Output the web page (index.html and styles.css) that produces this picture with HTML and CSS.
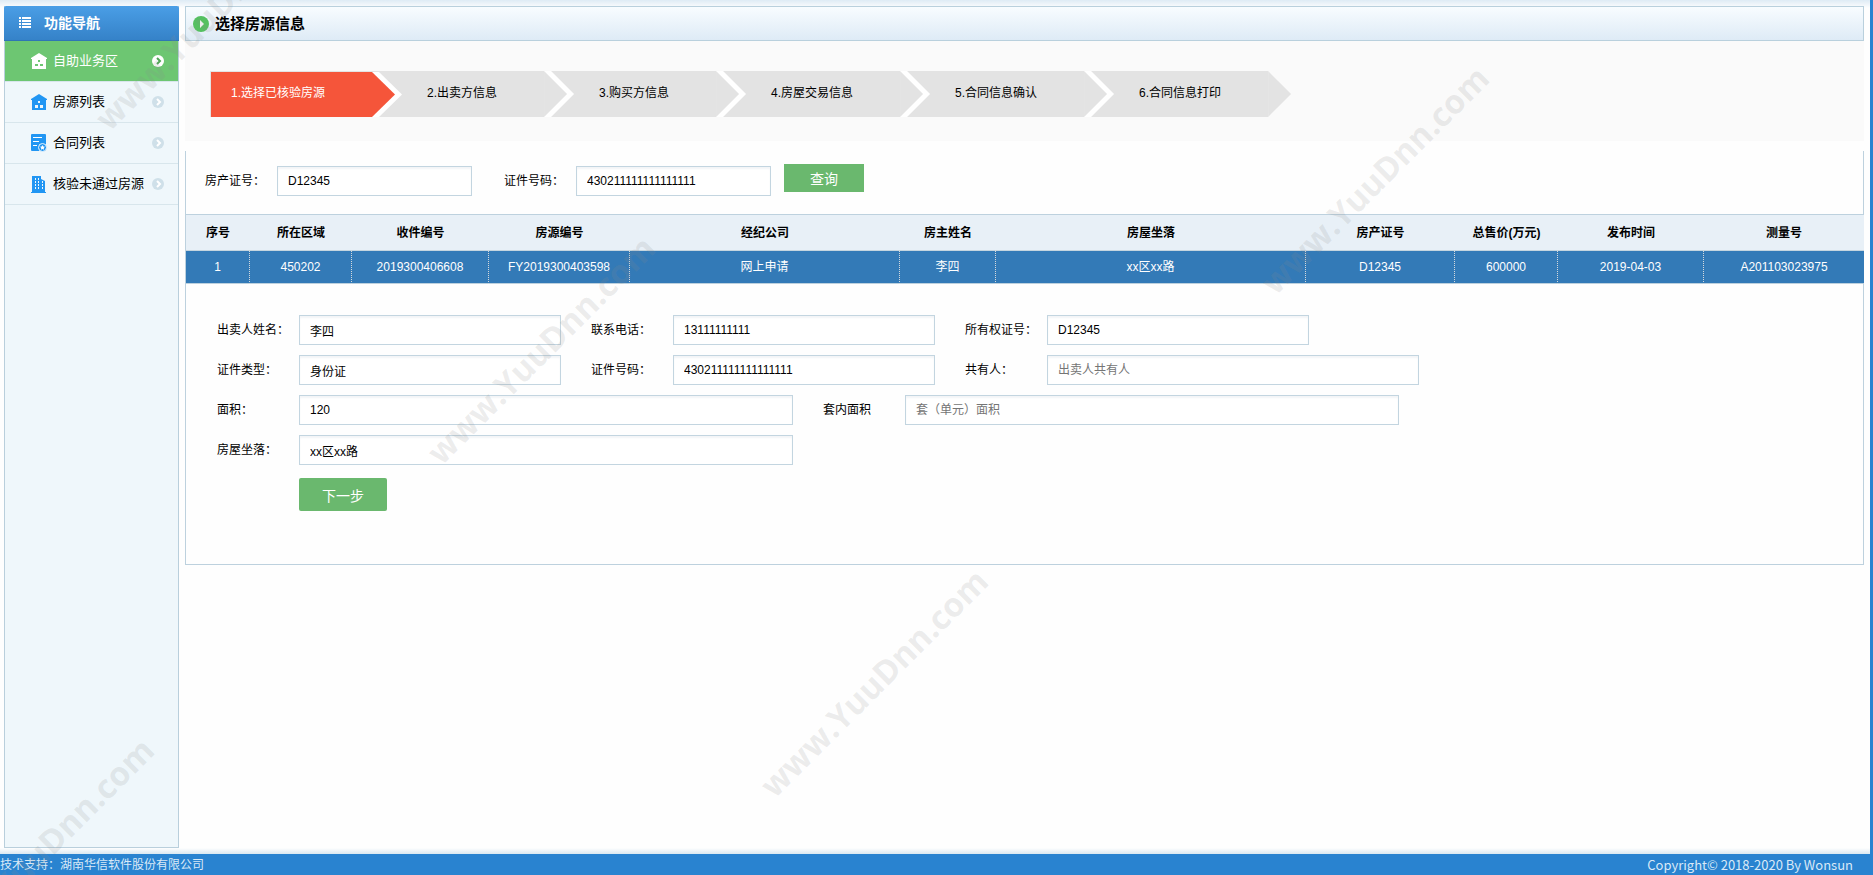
FILE: index.html
```html
<!DOCTYPE html>
<html lang="zh-CN">
<head>
<meta charset="utf-8">
<title>选择房源信息</title>
<link rel="stylesheet" href="styles.css">
</head>
<body>
<div class="page">
  <aside class="sidebar">
    <h2 class="sidebar-title">
      <svg width="12" height="12" viewBox="0 0 12 12" fill="#fff" aria-hidden="true"><path d="M0 0h2v2H0zM3 0h9v2H3zM0 3h2v2H0zM3 3h9v2H3zM0 6h2v2H0zM3 6h9v2H3zM0 9h2v2H0zM3 9h9v2H3z"/></svg>
      功能导航
    </h2>
    <nav class="menu">
      <a class="menu-item active" href="#">
        <svg width="16" height="17" viewBox="0 0 16 17" aria-hidden="true"><path fill="currentColor" fill-rule="evenodd" d="M8 0l8 5v1h-1v10H1V6H0V5zM7 7v2h2V7zM4 11v2h3v-2zM9 11v2h3v-2z"/></svg>
        <span class="menu-text">自助业务区</span>
        <svg class="go" width="12" height="12" viewBox="0 0 12 12" aria-hidden="true"><circle cx="6" cy="6" r="6" fill="currentColor"/><path class="go-mark" d="M5 3l3 3-3 3" fill="none" stroke-width="2"/></svg>
      </a>
      <a class="menu-item" href="#">
        <svg width="16" height="17" viewBox="0 0 16 17" aria-hidden="true"><path fill="currentColor" fill-rule="evenodd" d="M8 0l8 5v1h-1v10H1V6H0V5zM7 7v2h2V7zM4 11v3h3v-3zM9 11v3h3v-3z"/></svg>
        <span class="menu-text">房源列表</span>
        <svg class="go" width="12" height="12" viewBox="0 0 12 12" aria-hidden="true"><circle cx="6" cy="6" r="6" fill="currentColor"/><path class="go-mark" d="M5 3l3 3-3 3" fill="none" stroke-width="2"/></svg>
      </a>
      <a class="menu-item" href="#">
        <svg width="16" height="18" viewBox="0 0 16 18" aria-hidden="true"><path fill="currentColor" d="M1 0h13a1 1 0 0 1 1 1v16H1a1 1 0 0 1-1-1V1a1 1 0 0 1 1-1z"/><path d="M2 3.500h9M2 7.500h6M2 11.500h4" stroke="#fff" stroke-width="1"/><circle cx="11.500" cy="13.500" r="4" fill="#2196f3" stroke="#eff7fb"/><path fill="#fff" d="M11.500 11l.8 1.600 1.700.2-1.200 1.200.3 1.800-1.600-.8-1.600.8.3-1.800L9 12.800l1.700-.2z"/></svg>
        <span class="menu-text">合同列表</span>
        <svg class="go" width="12" height="12" viewBox="0 0 12 12" aria-hidden="true"><circle cx="6" cy="6" r="6" fill="currentColor"/><path class="go-mark" d="M5 3l3 3-3 3" fill="none" stroke-width="2"/></svg>
      </a>
      <a class="menu-item" href="#">
        <svg width="16" height="17" viewBox="0 0 16 17" aria-hidden="true"><path fill="currentColor" d="M1 0h9v3l4 2v11h1v1H0v-1h1z"/><path d="M4.500 2v12M7.500 2v12M11.500 5v9" stroke="#eff7fb" stroke-width="1" stroke-dasharray="2 1"/></svg>
        <span class="menu-text">核验未通过房源</span>
        <svg class="go" width="12" height="12" viewBox="0 0 12 12" aria-hidden="true"><circle cx="6" cy="6" r="6" fill="currentColor"/><path class="go-mark" d="M5 3l3 3-3 3" fill="none" stroke-width="2"/></svg>
      </a>
    </nav>
  </aside>

  <main class="main">
    <h1 class="title">
      <svg width="16" height="16" viewBox="0 0 16 16" aria-hidden="true"><circle cx="8" cy="8" r="8" fill="#55c060"/><path d="M7 4l4 4-4 4z" fill="#fff"/></svg>
      选择房源信息
    </h1>
    <div class="steps-area">
      <ol class="steps">
        <li class="step current">1.选择已核验房源</li>
        <li class="step">2.出卖方信息</li>
        <li class="step">3.购买方信息</li>
        <li class="step">4.房屋交易信息</li>
        <li class="step">5.合同信息确认</li>
        <li class="step">6.合同信息打印</li>
      </ol>
    </div>
    <section class="panel">
      <form class="query">
        <div class="query-field">
          <label for="q-cert">房产证号：</label>
          <input class="input" id="q-cert" type="text" value="D12345">
        </div>
        <div class="query-field">
          <label for="q-id">证件号码：</label>
          <input class="input" id="q-id" type="text" value="430211111111111111">
        </div>
        <button class="button search" type="button">查询</button>
      </form>

      <table class="grid">
        <colgroup>
          <col class="c-no"><col class="c-area"><col class="c-receipt"><col class="c-house"><col class="c-agent"><col class="c-owner"><col class="c-place"><col class="c-cert"><col class="c-price"><col class="c-date"><col class="c-survey">
        </colgroup>
        <thead>
          <tr><th>序号</th><th>所在区域</th><th>收件编号</th><th>房源编号</th><th>经纪公司</th><th>房主姓名</th><th>房屋坐落</th><th>房产证号</th><th>总售价(万元)</th><th>发布时间</th><th>测量号</th></tr>
        </thead>
        <tbody>
          <tr><td>1</td><td>450202</td><td>2019300406608</td><td>FY2019300403598</td><td>网上申请</td><td>李四</td><td>xx区xx路</td><td>D12345</td><td>600000</td><td>2019-04-03</td><td>A201103023975</td></tr>
        </tbody>
      </table>

      <form class="detail">
        <div class="row">
          <div class="field"><label for="f-name">出卖人姓名：</label><input class="input" id="f-name" type="text" value="李四"></div>
          <div class="field"><label for="f-tel">联系电话：</label><input class="input" id="f-tel" type="text" value="13111111111"></div>
          <div class="field"><label for="f-own">所有权证号：</label><input class="input" id="f-own" type="text" value="D12345"></div>
        </div>
        <div class="row">
          <div class="field"><label for="f-type">证件类型：</label><input class="input" id="f-type" type="text" value="身份证"></div>
          <div class="field"><label for="f-id">证件号码：</label><input class="input" id="f-id" type="text" value="430211111111111111"></div>
          <div class="field"><label for="f-co">共有人：</label><input class="input medium" id="f-co" type="text" placeholder="出卖人共有人"></div>
        </div>
        <div class="row">
          <div class="field"><label for="f-size">面积：</label><input class="input wide" id="f-size" type="text" value="120"></div>
          <div class="field"><label for="f-inner">套内面积</label><input class="input wide" id="f-inner" type="text" placeholder="套（单元）面积"></div>
        </div>
        <div class="row">
          <div class="field"><label for="f-place">房屋坐落：</label><input class="input wide" id="f-place" type="text" value="xx区xx路"></div>
        </div>
        <div class="actions"><button class="button next" type="button">下一步</button></div>
      </form>
    </section>
  </main>
</div>

<footer class="footer">
  <span>技术支持：湖南华信软件股份有限公司</span>
  <span class="copyright">Copyright© 2018-2020 By Wonsun</span>
</footer>

<div class="watermarks" aria-hidden="true">
  <span class="mark mark-a">www.YuuDnn.com</span>
  <span class="mark mark-b">www.YuuDnn.com</span>
  <span class="mark mark-c">www.YuuDnn.com</span>
  <span class="mark mark-d">www.YuuDnn.com</span>
  <span class="mark mark-e">www.YuuDnn.com</span>
</div>
</body>
</html>
```
FILE: styles.css
```css
* { box-sizing: border-box; }

body {
  margin: 0;
  min-height: 100vh;
  display: flex;
  flex-direction: column;
  position: relative;
  border-right: 3px solid #2983d0;
  background: #fefefe;
  color: #000;
  font: 12px/18px "Liberation Sans", "Noto Sans CJK SC", sans-serif;
}

.page {
  flex: 1;
  display: flex;
  gap: 6px;
  padding: 6px 6px 6px 4px;
  background:
    linear-gradient(#deebf5, #fefefe) top / 100% 8px no-repeat,
    linear-gradient(#fefefe, #d9e8f1) bottom / 100% 6px no-repeat;
}

/* Sidebar */
.sidebar {
  width: 175px;
  flex: none;
  border: 1px solid #b9cfdc;
  border-top: 0;
  background: #eff7fb;
}

.sidebar-title {
  display: flex;
  align-items: center;
  gap: 13px;
  height: 35px;
  margin: 0 -1px;
  padding-left: 15px;
  border-radius: 2px 2px 0 0;
  border-bottom: 1px solid #2f76b5;
  background: linear-gradient(#4a9ee6, #3582c8);
  color: #fff;
  font-size: 14px;
}

.menu-item {
  display: flex;
  align-items: center;
  height: 41px;
  padding: 0 14px 0 26px;
  border-bottom: 1px solid #d8e6ec;
  color: #2196f3;
  text-decoration: none;
}

.menu-item.active {
  background: #6dc672;
  color: #fff;
}

.menu-text {
  flex: 1;
  padding-left: 6px;
  color: #000;
  font-size: 13px;
  white-space: nowrap;
}

.active .menu-text { color: #fff; }
.go { flex: none; color: #cfe0e9; }
.go-mark { stroke: #fff; }
.active .go { color: #fff; }
.active .go-mark { stroke: #4fa555; }

/* Main column */
.main {
  flex: 1;
  min-width: 0;
}

.title {
  display: flex;
  align-items: center;
  gap: 6px;
  height: 35px;
  margin: 0;
  padding-left: 7px;
  border: 1px solid #b9d0dd;
  background: linear-gradient(#f8fcff, #deebf6);
  font-size: 15px;
}

.steps-area {
  height: 100px;
  padding: 30px 25px 0;
  background: #fafafa;
}

.steps {
  display: flex;
  margin: 0;
  padding: 0;
  list-style: none;
}

.step {
  position: relative;
  height: 46px;
  padding: 0 47px 0 55px;
  background: #e3e3e3;
  line-height: 44px;
  white-space: nowrap;
}

.step.current {
  padding-left: 20px;
  border: solid #e3e3e3;
  border-width: 1px 0 0 1px;
  background: #f5553a;
  color: #fff;
  line-height: 42px;
}

.step::before,
.step::after {
  content: "";
  position: absolute;
  z-index: 1;
  top: 0;
  bottom: 0;
  left: 100%;
}

.step::before {
  width: 30px;
  background: #fff;
  clip-path: polygon(0 0, 7px 0, 100% 50%, 7px 100%, 0 100%);
}

.step::after {
  width: 23px;
  background: #e3e3e3;
  clip-path: polygon(0 0, 100% 50%, 0 100%);
}

.step.current::after { background: #f5553a; }
.step:last-child::before { display: none; }

.panel {
  margin-top: 10px;
  border: 1px solid #bdd1de;
  border-top: 0;
}

.query {
  display: flex;
  align-items: flex-start;
  padding: 13px 19px 18px;
}

.query-field {
  display: flex;
  align-items: center;
  padding-top: 2px;
}

.query-field + .query-field { margin-left: 32px; }
.query-field label { width: 72px; }
.query-field .input { width: 195px; }

.input {
  width: 262px;
  height: 30px;
  padding: 0 10px;
  border: 1px solid #c3d5e0;
  border-radius: 0;
  background: #fff;
  box-shadow: inset 0 2px 2px #f3f5f7;
  color: #000;
  font: inherit;
}

.input::placeholder { color: #757575; }
.input.medium { width: 372px; }
.input.wide { width: 494px; }

.button {
  border: 0;
  background: #6ab86e;
  color: #fff;
  font: 14px/20px "Noto Sans CJK SC", sans-serif;
}

.search {
  width: 80px;
  height: 28px;
  margin-left: 13px;
}

.next {
  width: 88px;
  height: 33px;
  border-radius: 2px;
}

/* Listing table */
.grid {
  width: 100%;
  table-layout: fixed;
  border-collapse: separate;
  border-spacing: 0;
  text-align: center;
}

.c-no { width: 64px; }
.c-area { width: 102px; }
.c-receipt { width: 137px; }
.c-house { width: 141px; }
.c-agent { width: 270px; }
.c-owner { width: 96px; }
.c-place { width: 310px; }
.c-cert { width: 149px; }
.c-price { width: 103px; }
.c-date { width: 146px; }
.c-survey { width: 160px; }

.grid th {
  height: 37px;
  padding: 0;
  border-top: 1px solid #bdd1de;
  border-bottom: 1px solid #c5d5df;
  background: #e8f0f7;
}

.grid td {
  height: 33px;
  padding: 0;
  border-right: 1px dotted #d5d9dc;
  border-bottom: 1px solid #bdd1de;
  background: #337ab7;
  color: #fff;
}

.grid td:last-child { border-right: 0; }

/* Seller and property details */
.detail {
  display: flex;
  flex-direction: column;
  gap: 10px;
  padding: 31px 31px 53px;
}

.row {
  display: flex;
  gap: 30px;
}

.field {
  display: flex;
  align-items: center;
}

.field label { width: 82px; }

.actions {
  display: flex;
  padding: 3px 0 0 82px;
}

/* Footer */
.footer {
  display: flex;
  justify-content: space-between;
  align-items: center;
  height: 21px;
  padding-right: 17px;
  background: #2983d0;
  color: #d9e9f7;
}

.copyright { font: 13px/20px "Noto Sans CJK SC", sans-serif; }

/* Diagonal watermark overlay */
.watermarks {
  position: absolute;
  inset: 0;
  overflow: hidden;
  pointer-events: none;
}

.mark {
  position: absolute;
  color: rgba(140, 140, 140, 0.17);
  font: 700 33px/40px "Open Sans", sans-serif;
  transform: translate(-50%, -50%) rotate(-45deg);
}

.mark-a { left: 209px; top: 16px; }
.mark-b { left: 541px; top: 350px; }
.mark-c { left: 1375px; top: 180px; }
.mark-d { left: 874px; top: 683px; }
.mark-e { left: 40px; top: 852px; }
```
